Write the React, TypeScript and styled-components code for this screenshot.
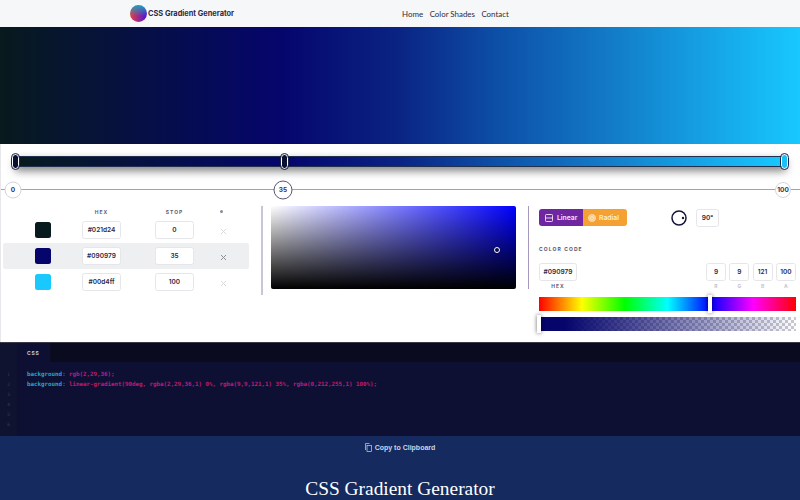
import React from "react";
import styled, { createGlobalStyle } from "styled-components";

const GRADIENT =
    "linear-gradient(90deg, #071a1d 0%, #05056c 35%, #0a2484 50%, #0d50a8 62.5%, #1277c5 75%, #18c8ff 100%)";

const GlobalStyle = createGlobalStyle`
    html, body {
        margin: 0;
        height: 500px;
        overflow: hidden;
        background: #fff;
        font-family: "Inter", "Liberation Sans", sans-serif;
    }
    * {
        box-sizing: border-box;
    }
`;

const Page = styled.div`
    width: 800px;
    height: 500px;
    display: flex;
    flex-direction: column;
    overflow: hidden;
`;

const Header = styled.header`
    height: 27px;
    flex: none;
    display: flex;
    align-items: center;
    padding-left: 130px;
    background: #f6f7f9;
`;

const Logo = styled.span`
    width: 17px;
    height: 17px;
    border-radius: 50%;
    background: linear-gradient(to bottom, #1aa3c0, rgba(26, 163, 192, 0) 65%),
        linear-gradient(to right, #e8403c, #4a14dc);
`;

const Brand = styled.span`
    margin-left: 1px;
    font-family: "Inter", sans-serif;
    font-size: 7.4px;
    font-weight: 700;
    color: #2a2a4a;
`;

const Nav = styled.nav`
    margin-left: 168px;
    display: flex;
    gap: 6.5px;
`;

const NavLink = styled.a`
    font-family: "Lato", sans-serif;
    font-size: 7.9px;
    color: #2b2b3b;
`;

const Preview = styled.div`
    height: 117px;
    flex: none;
    background: ${GRADIENT};
`;

const Workspace = styled.section`
    height: 198px;
    flex: none;
    display: flex;
    flex-direction: column;
    border-left: 1px solid #e8e8ec;
`;

const SliderWrap = styled.div`
    padding: 12px 14px 0 14px;
    height: 37px;
    flex: none;
`;

const Track = styled.div`
    position: relative;
    height: 11px;
    background: ${GRADIENT};
    border: 1px solid #22304f;
    box-shadow: 0 4px 9px rgba(0, 0, 0, 0.5);
`;

const Handle = styled.span<{ $at: number }>`
    position: absolute;
    top: -3px;
    left: ${p => p.$at}%;
    width: 7px;
    height: 15px;
    margin-left: -4px;
    border-radius: 4px;
    background: ${p => (p.$at === 100 ? "#18c0f5" : "#0a1030")};
    border: 1.5px solid #fff;
    outline: 1px solid #1d2547;
`;

const Ruler = styled.div`
    position: relative;
    height: 18px;
    flex: none;
    &::before {
        content: "";
        position: absolute;
        left: 0;
        right: 0;
        top: 8px;
        height: 1px;
        background: #ab9cc6;
    }
`;

const Stop = styled.span<{ $x: number; $size: number; $active?: boolean }>`
    position: absolute;
    left: ${p => p.$x}px;
    top: 8.5px;
    width: ${p => p.$size}px;
    height: ${p => p.$size}px;
    transform: translate(-50%, -50%);
    display: flex;
    align-items: center;
    justify-content: center;
    border-radius: 50%;
    background: #fff;
    border: 1px solid ${p => (p.$active ? "#55556f" : "#d5d5dc")};
    font-size: 6.5px;
    font-weight: 700;
    color: #33334f;
`;

const Columns = styled.div`
    flex: 1;
    display: flex;
    padding: 7px 3px 0 2px;
`;

const StopsColumn = styled.div`
    width: 246px;
    flex: none;
    height: 89px;
`;

const Row = styled.div<{ $active?: boolean }>`
    height: 26px;
    display: flex;
    align-items: center;
    padding-left: 32px;
    border-radius: 2px;
    background: ${p => (p.$active ? "#eeeff1" : "transparent")};
`;

const HeadRow = styled(Row)`
    height: 11px;
`;

const Swatch = styled.span<{ $color: string }>`
    width: 16px;
    height: 16px;
    flex: none;
    border-radius: 2.5px;
    background: ${p => p.$color};
`;

const SwatchSpace = styled.span`
    width: 16px;
    flex: none;
`;

const ColLabel = styled.span<{ $gap: number; $w: number }>`
    width: ${p => p.$w}px;
    margin-left: ${p => p.$gap}px;
    flex: none;
    text-align: center;
    font-size: 5px;
    font-weight: 700;
    letter-spacing: 1px;
    color: #5c5c70;
`;

const Field = styled.span<{ $gap?: number; $w: number }>`
    width: ${p => p.$w}px;
    height: 18px;
    margin-left: ${p => p.$gap || 0}px;
    flex: none;
    display: flex;
    align-items: center;
    justify-content: center;
    background: #fff;
    border: 1px solid #e6e6ea;
    border-radius: 2.5px;
    font-size: 6.5px;
    font-weight: 600;
    color: #2a2a48;
`;

const Remove = styled.span<{ $active?: boolean }>`
    margin-left: 26px;
    margin-top: 3px;
    display: flex;
    color: ${p => (p.$active ? "#8e8e98" : "#d8d8dc")};
`;

const Dot = styled.span`
    width: 3px;
    height: 3px;
    margin: 0 auto;
    display: block;
    border-radius: 50%;
    background: #8b8b98;
`;

const StopsDivider = styled.span`
    width: 2px;
    height: 89px;
    flex: none;
    margin-left: 12px;
    background: #c9c5d4;
`;

const ControlsDivider = styled.span`
    width: 1px;
    height: 83px;
    flex: none;
    background: #a598bf;
`;

const Saturation = styled.div`
    position: relative;
    width: 245px;
    height: 83px;
    flex: none;
    margin: 0 12px 0 8px;
    border-radius: 2px;
    background: linear-gradient(to top, #000, transparent), linear-gradient(to right, #fff, #00f);
`;

const Pointer = styled.span`
    position: absolute;
    left: 223px;
    top: 41px;
    width: 6px;
    height: 6px;
    border-radius: 50%;
    border: 1.5px solid #fff;
    background: #08084a;
`;

const Controls = styled.div`
    width: 257px;
    flex: none;
    margin-left: 10px;
`;

const TypeRow = styled.div`
    display: flex;
    align-items: center;
    height: 17px;
    margin-top: 3px;
`;

const TypeButton = styled.span<{ $radial?: boolean }>`
    width: 44px;
    height: 17px;
    display: flex;
    align-items: center;
    gap: ${p => (p.$radial ? 3 : 4)}px;
    padding-left: ${p => (p.$radial ? 5 : 6)}px;
    background: ${p => (p.$radial ? "#f5a033" : "#6f26a1")};
    border-radius: ${p => (p.$radial ? "0 3px 3px 0" : "3px 0 0 3px")};
    color: ${p => (p.$radial ? "#fdeeda" : "#f0e6f8")};
    font-size: 6.8px;
    font-weight: 600;
`;

const Dial = styled.svg`
    margin-left: 44px;
    flex: none;
`;

const AngleField = styled(Field)`
    margin-left: 9px;
`;

const CodeLabel = styled.div`
    margin-top: 20px;
    height: 8px;
    font-size: 5px;
    font-weight: 700;
    letter-spacing: 1.1px;
    color: #55556a;
`;

const ValuesRow = styled.div`
    margin-top: 9px;
    display: flex;
    gap: 3.3px;
`;

const ValueCol = styled.div<{ $push?: boolean }>`
    display: flex;
    flex-direction: column;
    align-items: center;
    margin-left: ${p => (p.$push ? "125.7px" : 0)};
`;

const ValueName = styled.span<{ $strong?: boolean }>`
    margin-top: 2px;
    height: 8px;
    font-size: 5px;
    font-weight: 700;
    letter-spacing: ${p => (p.$strong ? "1px" : 0)};
    color: ${p => (p.$strong ? "#5c5c70" : "#c4c4cc")};
`;

const BarStrip = styled.div<{ $alpha?: boolean }>`
    position: relative;
    height: 14px;
    margin-top: 6px;
    background: ${p =>
        p.$alpha
            ? "linear-gradient(to right, #05056c, #05056c 10%, rgba(9,9,121,0)), repeating-conic-gradient(#c9c9d2 0 25%, #fff 0 50%) 0 0 / 6px 6px"
            : "linear-gradient(to right, #f00, #ff0, #0f0, #0ff, #00f, #f0f, #f00)"};
`;

const BarKnob = styled.span<{ $left: number }>`
    position: absolute;
    left: ${p => p.$left}px;
    top: -2px;
    width: 3.5px;
    height: 18px;
    background: #fff;
    box-shadow: 0 0 4px rgba(0, 0, 0, 0.6);
`;

const Editor = styled.section`
    height: 94px;
    flex: none;
    display: flex;
    background: #0e1033;
    border-top: 1px solid #3a3a4a;
`;

const Gutter = styled.div`
    width: 17px;
    flex: none;
    padding-top: 27px;
    background: #10132f;
    font-family: "DejaVu Sans Mono", monospace;
    font-size: 4.5px;
    line-height: 10px;
    text-align: center;
    color: #363a5c;
`;

const EditorMain = styled.div`
    flex: 1;
`;

const TabBar = styled.div`
    height: 19px;
    background: #0a0b1e;
`;

const Tab = styled.span`
    width: 33px;
    height: 19px;
    display: flex;
    align-items: center;
    padding-left: 10px;
    background: #0e1033;
    font-size: 5px;
    font-weight: 700;
    letter-spacing: 0.8px;
    color: #c6c8d8;
`;

const CodeBody = styled.div`
    padding: 7px 0 0 10px;
    font-family: "DejaVu Sans Mono", monospace;
    font-size: 5.82px;
    font-weight: 700;
    line-height: 10px;
    white-space: pre;
    color: #c01a78;
`;

const Property = styled.span`
    color: #2ca6cc;
`;

const Footer = styled.footer`
    flex: 1;
    display: flex;
    flex-direction: column;
    align-items: center;
    background: #152a5e;
`;

const CopyButton = styled.button`
    margin-top: 7px;
    display: flex;
    align-items: center;
    gap: 3px;
    padding: 0;
    border: 0;
    background: none;
    font-family: "Liberation Sans", sans-serif;
    font-size: 7px;
    font-weight: 700;
    color: #ced4e2;
`;

const FooterTitle = styled.h1`
    margin: 26px 0 0;
    font-family: "Liberation Serif", serif;
    font-size: 19.4px;
    font-weight: 400;
    color: #fff;
    white-space: nowrap;
`;

const stops = [
    { hex: "#021d24", color: "#071a1d", stop: 0 },
    { hex: "#090979", color: "#05056c", stop: 35, active: true },
    { hex: "#00d4ff", color: "#18c8ff", stop: 100 },
];

const channels = [
    { name: "R", value: 9 },
    { name: "G", value: 9 },
    { name: "B", value: 121 },
    { name: "A", value: 100 },
];

const Cross = () => (
    <svg width="7" height="7" viewBox="0 0 7 7" fill="none" stroke="currentColor" strokeWidth="1">
        <path d="M1 1l5 5M6 1L1 6" />
    </svg>
);

const App: React.FC = () => (
    <Page>
        <GlobalStyle />
        <Header>
            <Logo />
            <Brand>CSS Gradient Generator</Brand>
            <Nav>
                <NavLink>Home</NavLink>
                <NavLink>Color Shades</NavLink>
                <NavLink>Contact</NavLink>
            </Nav>
        </Header>
        <Preview />
        <Workspace>
            <SliderWrap>
                <Track>
                    <Handle $at={0} />
                    <Handle $at={35} />
                    <Handle $at={100} />
                </Track>
            </SliderWrap>
            <Ruler>
                <Stop $x={12} $size={17}>0</Stop>
                <Stop $x={282} $size={19} $active>35</Stop>
                <Stop $x={782} $size={16}>100</Stop>
            </Ruler>
            <Columns>
                <StopsColumn>
                    <HeadRow>
                        <SwatchSpace />
                        <ColLabel $gap={31} $w={39}>HEX</ColLabel>
                        <ColLabel $gap={34} $w={39}>STOP</ColLabel>
                        <ColLabel $gap={20} $w={14}><Dot /></ColLabel>
                    </HeadRow>
                    {stops.map(s => (
                        <Row key={s.hex} $active={s.active}>
                            <Swatch $color={s.color} />
                            <Field $gap={31} $w={39}>{s.hex}</Field>
                            <Field $gap={34} $w={39}>{s.stop}</Field>
                            <Remove $active={s.active}><Cross /></Remove>
                        </Row>
                    ))}
                </StopsColumn>
                <StopsDivider />
                <Saturation>
                    <Pointer />
                </Saturation>
                <ControlsDivider />
                <Controls>
                    <TypeRow>
                        <TypeButton>
                            <svg width="8" height="8" viewBox="0 0 8 8" fill="none" stroke="#f0e6f8" strokeWidth="0.9">
                                <rect x="0.5" y="0.5" width="7" height="7" rx="0.8" />
                                <path d="M0.5 4h7" />
                            </svg>
                            Linear
                        </TypeButton>
                        <TypeButton $radial>
                            <svg width="8" height="8" viewBox="0 0 8 8" fill="#f9c98a" stroke="#fde7c6" strokeWidth="0.8">
                                <circle cx="4" cy="4" r="3.5" />
                                <circle cx="4" cy="4" r="1.6" />
                            </svg>
                            Radial
                        </TypeButton>
                        <Dial width="16" height="16" viewBox="0 0 16 16" fill="none">
                            <circle cx="8" cy="8" r="7" stroke="#14143c" strokeWidth="1.5" />
                            <circle cx="12" cy="8" r="1.2" fill="#14143c" />
                        </Dial>
                        <AngleField $w={23}>90°</AngleField>
                    </TypeRow>
                    <CodeLabel>COLOR CODE</CodeLabel>
                    <ValuesRow>
                        <ValueCol>
                            <Field $w={38}>#090979</Field>
                            <ValueName $strong>HEX</ValueName>
                        </ValueCol>
                        {channels.map((c, i) => (
                            <ValueCol key={c.name} $push={i === 0}>
                                <Field $w={20}>{c.value}</Field>
                                <ValueName>{c.name}</ValueName>
                            </ValueCol>
                        ))}
                    </ValuesRow>
                    <BarStrip>
                        <BarKnob $left={169} />
                    </BarStrip>
                    <BarStrip $alpha>
                        <BarKnob $left={-2} />
                    </BarStrip>
                </Controls>
            </Columns>
        </Workspace>
        <Editor>
            <Gutter>
                {[1, 2, 3, 4, 5, 6].map(n => (
                    <div key={n}>{n}</div>
                ))}
            </Gutter>
            <EditorMain>
                <TabBar>
                    <Tab>CSS</Tab>
                </TabBar>
                <CodeBody>
                    <div><Property>background</Property>: rgb(2,29,36);</div>
                    <div><Property>background</Property>: linear-gradient(90deg, rgba(2,29,36,1) 0%, rgba(9,9,121,1) 35%, rgba(0,212,255,1) 100%);</div>
                </CodeBody>
            </EditorMain>
        </Editor>
        <Footer>
            <CopyButton>
                <svg width="7" height="9" viewBox="0 0 7 9" fill="none" stroke="#ced4e2" strokeWidth="0.7">
                    <path d="M0.5 7V0.5H4.5" />
                    <rect x="2" y="2.5" width="4.5" height="6" />
                </svg>
                Copy to Clipboard
            </CopyButton>
            <FooterTitle>CSS Gradient Generator</FooterTitle>
        </Footer>
    </Page>
);

export default App;
